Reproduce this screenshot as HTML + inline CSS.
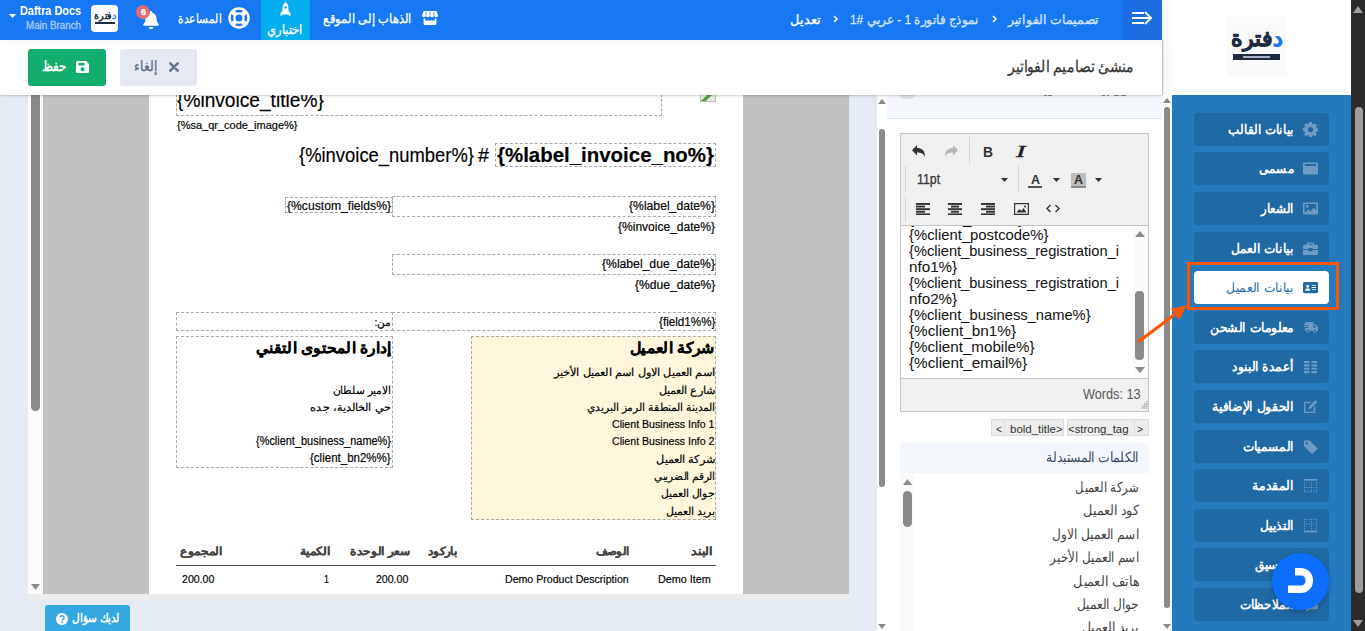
<!DOCTYPE html>
<html lang="ar">
<head>
<meta charset="utf-8">
<title>منشئ تصاميم الفواتير</title>
<style>
*{box-sizing:border-box;margin:0;padding:0}
html,body{width:1365px;height:631px;overflow:hidden}
body{position:relative;background:#e4ebf3;font-family:"Liberation Sans",sans-serif;color:#222}
.abs{position:absolute}
.t{position:absolute;white-space:nowrap;line-height:1;color:#222}
#topbar{left:0;top:0;width:1162px;height:40px;background:#1877f2;box-shadow:4px 0 10px rgba(0,0,0,.06)}
#tab{left:261px;top:0;width:49px;height:40px;background:#05aeef}
#topbar .t{-webkit-text-stroke:.3px currentColor}
#menu{left:1122px;top:0;width:40px;height:40px;background:#1a6ce0}
#subhead{left:0;top:40px;width:1163px;height:55px;background:#fff;border-right:1px solid #c6c6c6;box-shadow:0 1px 1.500px rgba(0,0,0,.16),5px 0 10px rgba(0,0,0,.05)}
#logoarea{left:1162px;top:0;width:189px;height:95px;background:#fff}
#logobox{left:65px;top:17px;width:60px;height:60px;background:#fafafa}
#pscroll{left:1351px;top:0;width:14px;height:631px;background:#2b2b2b}
#side{left:1172px;top:95px;width:179px;height:536px;background:#237abd}
.sb{position:absolute;left:22px;width:135px;height:33px;border-radius:4px;background:#1f69a4}
.sb svg{position:absolute;right:11px;top:9px;width:15px;height:15px;fill:#6d9cc6}
.sb.on{background:#fff}
.sb.on svg{fill:#1f69a4}
#mid{left:877px;top:95px;width:295px;height:536px;background:#fff;overflow:hidden}
.thumb{position:absolute;background:#8a8a8a;border-radius:4px}
#prev{left:28px;top:95px;width:821px;height:499px;background:#c2c2c2;overflow:hidden}
#prevtrack{left:0;top:0;width:15px;height:499px;background:#fcfcfc}
#paper{left:121px;top:0;width:594px;height:499px;background:#fff;overflow:hidden}
#paper .t{-webkit-text-stroke:.18px currentColor}
#prevfoot{left:28px;top:594px;width:821px;height:5px;background:#ececec}
</style>
</head>
<body>

<div id="prev" class="abs">
  <div id="prevtrack" class="abs">
    <div class="thumb" style="left:3px;top:-6px;width:9px;height:322px;border-radius:4.500px"></div>
    <svg class="abs" style="left:3px;top:488.500px" width="9" height="6"><path d="M0 0h9L4.500 6z" fill="#8a8a8a"/></svg>
  </div>
  <div id="paper" class="abs">
<div class="abs" style="left:27.0px;top:-15.0px;width:486.0px;height:35.9px;border:1px dashed #a9a9a9"></div>
<div class="abs" style="left:346.3px;top:48.0px;width:220.7px;height:23.5px;border:1px dashed #a9a9a9"></div>
<div class="abs" style="left:136.0px;top:102.0px;width:107.5px;height:16.0px;border:1px dashed #a9a9a9"></div>
<div class="abs" style="left:243.0px;top:101.0px;width:324.0px;height:20.5px;border:1px dashed #a9a9a9"></div>
<div class="abs" style="left:243.0px;top:159.0px;width:324.0px;height:20.5px;border:1px dashed #a9a9a9"></div>
<div class="abs" style="left:243.0px;top:217.0px;width:324.0px;height:19.0px;border:1px dashed #a9a9a9"></div>
<div class="abs" style="left:27.0px;top:217.0px;width:216.5px;height:19.0px;border:1px dashed #a9a9a9"></div>
<div class="abs" style="left:322.0px;top:240.8px;width:245.0px;height:184.2px;background:#fff6dc;border:1px dashed #a9a9a9"></div>
<div class="abs" style="left:27.0px;top:241.0px;width:216.5px;height:132.0px;border:1px dashed #a9a9a9"></div>
<div class="abs" style="left:551.0px;top:-5.0px;width:16.0px;height:11.5px;background:#e8efe4;border:1px solid #b9c4b4"></div>
<svg class="abs" style="left:552px;top:0px" width="14" height="6"><path d="M0 6L6 0h5L5 6z" fill="#5aa04a"/></svg>
<div class="t" style="font-size:20.5px;color:#000;top:-5.0px;--w:146.8px;left:27.7px;transform:scaleX(0.884);transform-origin:0 0">{%invoice_title%}</div>
<div class="t" style="font-size:11px;color:#000;top:24.8px;--w:120.5px;left:27.5px;transform:scaleX(0.996);transform-origin:0 0">{%sa_qr_code_image%}</div>
<div class="t" style="font-size:20.5px;color:#000;top:50.2px;--w:175.0px;left:150.0px;transform:scaleX(0.854);transform-origin:0 0">{%invoice_number%}</div>
<div class="t" style="font-size:20.5px;color:#000;top:50.2px;--w:11.0px;left:328.5px;transform:scaleX(0.917);transform-origin:0 0">#</div>
<div class="t" style="font-size:20.5px;font-weight:bold;color:#000;top:50.2px;--w:217.0px;left:348.0px;transform:scaleX(0.956);transform-origin:0 0">{%label_invoice_no%}</div>
<div class="t" style="font-size:12.5px;color:#000;top:104.8px;--w:104.0px;left:138.0px;transform:scaleX(0.920);transform-origin:0 0">{%custom_fields%}</div>
<div class="t" style="font-size:12.5px;color:#000;top:105.1px;--w:86.0px;left:480.0px;transform:scaleX(0.945);transform-origin:0 0">{%label_date%}</div>
<div class="t" style="font-size:12.5px;color:#000;top:125.6px;--w:97.0px;left:469.0px;transform:scaleX(0.924);transform-origin:0 0">{%invoice_date%}</div>
<div class="t" style="font-size:12.5px;color:#000;top:163.1px;--w:113.0px;left:453.0px;transform:scaleX(0.950);transform-origin:0 0">{%label_due_date%}</div>
<div class="t" style="font-size:12.5px;color:#000;top:183.6px;--w:80.3px;left:485.7px;transform:scaleX(0.945);transform-origin:0 0">{%due_date%}</div>
<div class="t" style="font-size:12.5px;color:#000;top:220.6px;--w:56.5px;left:509.5px;transform:scaleX(0.897);transform-origin:0 0">{field1%%}</div>
<div class="t" dir="rtl" style="font-size:11px;color:#000;top:222.3px;--w:16.5px;left:242.0px;transform:translateX(-100%) scaleX(0.971);transform-origin:100% 0">من:</div>
<div class="t" dir="rtl" style="font-size:15px;font-weight:bold;color:#000;top:244.7px;--w:85.3px;left:566.0px;transform:translateX(-100%) scaleX(0.907);transform-origin:100% 0">شركة العميل</div>
<div class="t" dir="rtl" style="font-size:11px;color:#000;top:272.4px;--w:161.2px;left:566.0px;transform:translateX(-100%) scaleX(1.033);transform-origin:100% 0">اسم العميل الاول اسم العميل الأخير</div>
<div class="t" dir="rtl" style="font-size:11px;color:#000;top:290.1px;--w:56.4px;left:566.0px;transform:translateX(-100%) scaleX(1.025);transform-origin:100% 0">شارع العميل</div>
<div class="t" dir="rtl" style="font-size:11px;color:#000;top:306.9px;--w:128.4px;left:566.0px;transform:translateX(-100%) scaleX(0.973);transform-origin:100% 0">المدينة المنطقة الرمز البريدي</div>
<div class="t" style="font-size:11.3px;color:#000;top:323.8px;--w:102.5px;left:463.0px;transform:scaleX(0.976);transform-origin:0 0">Client Business Info 1</div>
<div class="t" style="font-size:11.3px;color:#000;top:340.5px;--w:102.5px;left:463.0px;transform:scaleX(0.976);transform-origin:0 0">Client Business Info 2</div>
<div class="t" dir="rtl" style="font-size:11px;color:#000;top:359.4px;--w:58.7px;left:566.0px;transform:translateX(-100%) scaleX(1.030);transform-origin:100% 0">شركة العميل</div>
<div class="t" dir="rtl" style="font-size:11px;color:#000;top:376.4px;--w:61.0px;left:566.0px;transform:translateX(-100%) scaleX(0.953);transform-origin:100% 0">الرقم الضريبي</div>
<div class="t" dir="rtl" style="font-size:11px;color:#000;top:393.1px;--w:53.7px;left:566.0px;transform:translateX(-100%) scaleX(0.976);transform-origin:100% 0">جوال العميل</div>
<div class="t" dir="rtl" style="font-size:11px;color:#000;top:410.5px;--w:48.6px;left:566.0px;transform:translateX(-100%) scaleX(0.992);transform-origin:100% 0">بريد العميل</div>
<div class="t" dir="rtl" style="font-size:15px;font-weight:bold;color:#000;top:244.7px;--w:135.5px;left:242.0px;transform:translateX(-100%) scaleX(0.880);transform-origin:100% 0">إدارة المحتوى التقني</div>
<div class="t" dir="rtl" style="font-size:11px;color:#000;top:290.2px;--w:58.4px;left:242.0px;transform:translateX(-100%) scaleX(0.973);transform-origin:100% 0">الامير سلطان</div>
<div class="t" dir="rtl" style="font-size:11px;color:#000;top:307.3px;--w:80.7px;left:242.0px;transform:translateX(-100%) scaleX(1.022);transform-origin:100% 0">حي الخالدية، جده</div>
<div class="t" style="font-size:12.5px;color:#000;top:339.8px;--w:135.0px;left:107.0px;transform:scaleX(0.839);transform-origin:0 0">{%client_business_name%}</div>
<div class="t" style="font-size:12.5px;color:#000;top:357.4px;--w:80.7px;left:161.3px;transform:scaleX(0.887);transform-origin:0 0">{client_bn2%%}</div>
<div class="t" dir="rtl" style="font-size:11px;font-weight:bold;color:#444;top:451.1px;--w:42.0px;left:73.0px;transform:translateX(-100%) scaleX(0.933);transform-origin:100% 0">المجموع</div>
<div class="t" dir="rtl" style="font-size:11px;font-weight:bold;color:#444;top:451.1px;--w:30.5px;left:181.0px;transform:translateX(-100%) scaleX(0.953);transform-origin:100% 0">الكمية</div>
<div class="t" dir="rtl" style="font-size:11px;font-weight:bold;color:#444;top:451.1px;--w:60.0px;left:261.0px;transform:translateX(-100%) scaleX(0.952);transform-origin:100% 0">سعر الوحدة</div>
<div class="t" dir="rtl" style="font-size:11px;font-weight:bold;color:#444;top:451.1px;--w:29.3px;left:308.0px;transform:translateX(-100%) scaleX(0.888);transform-origin:100% 0">باركود</div>
<div class="t" dir="rtl" style="font-size:11px;font-weight:bold;color:#444;top:451.1px;--w:33.4px;left:480.4px;transform:translateX(-100%) scaleX(0.856);transform-origin:100% 0">الوصف</div>
<div class="t" dir="rtl" style="font-size:11px;font-weight:bold;color:#444;top:451.1px;--w:20.7px;left:563.0px;transform:translateX(-100%) scaleX(0.941);transform-origin:100% 0">البند</div>
<div class="abs" style="left:27.0px;top:469.8px;width:540.0px;height:1.2px;background:#444"></div>
<div class="t" style="font-size:11.5px;color:#000;top:478.5px;--w:32.4px;left:32.6px;transform:scaleX(0.853);transform-origin:0 0">200.00</div>
<div class="t" style="font-size:11.5px;color:#000;top:478.5px;--w:5.0px;left:175.0px;transform:scaleX(0.714);transform-origin:0 0">1</div>
<div class="t" style="font-size:11.5px;color:#000;top:478.5px;--w:32.3px;left:226.7px;transform:scaleX(0.850);transform-origin:0 0">200.00</div>
<div class="t" style="font-size:11.5px;color:#000;top:478.5px;--w:123.7px;left:355.5px;transform:scaleX(0.865);transform-origin:0 0">Demo Product Description</div>
<div class="t" style="font-size:11.5px;color:#000;top:478.5px;--w:52.8px;left:508.5px;transform:scaleX(0.895);transform-origin:0 0">Demo Item</div>
  </div>
</div>
<div id="prevfoot" class="abs"></div>

<div id="mid" class="abs">
<div class="abs" style="left:10.0px;top:0.0px;width:275.0px;height:24.4px;background:#f5f8fc;border-bottom:1px solid #dbe4f1"></div>
<div class="abs" style="left:21.0px;top:-11.0px;width:18.0px;height:15.0px;background:#dfe1e6;border-radius:9px"></div>
<div class="abs" style="left:166.5px;top:0.0px;width:3.0px;height:1.3px;background:#5d6473;opacity:.7"></div><div class="abs" style="left:171.0px;top:0.0px;width:4.0px;height:1.3px;background:#5d6473;opacity:.7"></div><div class="abs" style="left:224.5px;top:0.0px;width:3.5px;height:1.3px;background:#5d6473;opacity:.7"></div><div class="abs" style="left:229.5px;top:0.0px;width:2.5px;height:1.3px;background:#5d6473;opacity:.7"></div><div class="abs" style="left:237.0px;top:0.0px;width:5.0px;height:1.3px;background:#5d6473;opacity:.7"></div><div class="abs" style="left:244.0px;top:0.0px;width:4.5px;height:1.3px;background:#5d6473;opacity:.7"></div>
<svg class="abs" style="left:1.0px;top:3.5px" width="8" height="5"><path d="M4.0 0L8 5H0z" fill="#8a8a8a"/></svg>
<div class="abs" style="left:2.2px;top:34.0px;width:5.6px;height:357.5px;background:#8a8a8a;border-radius:3px"></div>
<svg class="abs" style="left:1.0px;top:528.5px" width="8" height="5"><path d="M0 0H8L4.0 5z" fill="#8a8a8a"/></svg>
<svg class="abs" style="left:286.0px;top:2.5px" width="8" height="5"><path d="M4.0 0L8 5H0z" fill="#8a8a8a"/></svg>
<div class="abs" style="left:287.0px;top:12.0px;width:6.0px;height:500.6px;background:#8a8a8a;border-radius:3px"></div>
<svg class="abs" style="left:286.0px;top:529.0px" width="8" height="5"><path d="M0 0H8L4.0 5z" fill="#8a8a8a"/></svg>
<div class="abs" style="left:23.0px;top:38.0px;width:249.0px;height:279.2px;background:#f0f0f0;border:1px solid #c4c4c4"></div>
<div class="abs" style="left:24.0px;top:130.0px;width:247.0px;height:154.3px;background:#fff;border-top:1px solid #c4c4c4;border-bottom:1px solid #c4c4c4"></div>
<div class="abs" style="left:92.4px;top:42.0px;width:1.0px;height:26.5px;background:#d4d4d4"></div>
<div class="abs" style="left:27.7px;top:71.0px;width:1.0px;height:26.0px;background:#d4d4d4"></div>
<div class="abs" style="left:141.3px;top:71.0px;width:1.0px;height:26.0px;background:#d4d4d4"></div>
<div class="abs" style="left:27.7px;top:101.5px;width:1.0px;height:25.5px;background:#d4d4d4"></div>
<svg class="abs" style="left:35.0px;top:50.0px" width="13" height="12" viewBox="0 0 13 12"><path d="M5 0v3c5 0 8 2.500 8 9-1.500-3.500-4-4.500-8-4.500v3L0 5.200z" fill="#333"/></svg>
<svg class="abs" style="left:68.0px;top:50.0px" width="13" height="12" viewBox="0 0 13 12"><path d="M8 0v3c-5 0-8 2.500-8 9 1.500-3.500 4-4.500 8-4.500v3l5-5.300z" fill="#b5b5b5"/></svg>
<div class="t" style="font-size:15px;font-weight:bold;color:#333;top:48.5px;--w:10.0px;left:105.5px;transform:scaleX(0.909);transform-origin:0 0">B</div>
<div class="t" style="font-size:17px;font-style:italic;font-family:'Liberation Serif',sans-serif;top:47.5px;--w:9.5px;left:138.5px;transform:scaleX(1.583);transform-origin:0 0;-webkit-text-stroke:.4px #222">I</div>
<div class="t" style="font-size:14.5px;color:#333;top:77.2px;--w:23.1px;left:39.6px;transform:scaleX(0.856);transform-origin:0 0;-webkit-text-stroke:.25px #333">11pt</div>
<svg class="abs" style="left:124.4px;top:82.5px" width="7" height="4"><path d="M0 0H7L3.5 4z" fill="#333"/></svg>
<div class="t" style="font-size:12.5px;font-weight:bold;color:#333;top:79.1px;--w:9.0px;left:154.0px;transform:scaleX(1.000);transform-origin:0 0">A</div>
<div class="abs" style="left:151.0px;top:90.8px;width:14.0px;height:2.0px;background:#555"></div>
<svg class="abs" style="left:175.5px;top:82.5px" width="7" height="4"><path d="M0 0H7L3.5 4z" fill="#333"/></svg>
<div class="abs" style="left:194.2px;top:78.0px;width:14.8px;height:14.6px;background:#bdbdbd"></div>
<div class="t" style="font-size:12.5px;font-weight:bold;color:#333;top:79.1px;--w:9.0px;left:197.2px;transform:scaleX(1.000);transform-origin:0 0">A</div>
<div class="abs" style="left:194.2px;top:90.5px;width:14.8px;height:2.1px;background:#8c8c8c"></div>
<svg class="abs" style="left:218.4px;top:82.5px" width="7" height="4"><path d="M0 0H7L3.5 4z" fill="#333"/></svg>
<svg class="abs" style="left:38.7px;top:107.8px" width="14" height="12.5" viewBox="0 0 14 12.5"><g fill="#333"><rect x="0" y="0.0" width="14" height="1.900"/><rect x="0" y="2.6" width="9" height="1.900"/><rect x="0" y="5.2" width="14" height="1.900"/><rect x="0" y="7.8" width="9" height="1.900"/><rect x="0" y="10.4" width="14" height="1.900"/></g></svg>
<svg class="abs" style="left:71.0px;top:107.8px" width="14" height="12.5" viewBox="0 0 14 12.5"><g fill="#333"><rect x="0.0" y="0.0" width="14" height="1.900"/><rect x="3.0" y="2.6" width="8" height="1.900"/><rect x="0.0" y="5.2" width="14" height="1.900"/><rect x="3.0" y="7.8" width="8" height="1.900"/><rect x="0.0" y="10.4" width="14" height="1.900"/></g></svg>
<svg class="abs" style="left:104.0px;top:107.8px" width="14" height="12.5" viewBox="0 0 14 12.5"><g fill="#333"><rect x="0" y="0.0" width="14" height="1.900"/><rect x="5" y="2.6" width="9" height="1.900"/><rect x="0" y="5.2" width="14" height="1.900"/><rect x="5" y="7.8" width="9" height="1.900"/><rect x="0" y="10.4" width="14" height="1.900"/></g></svg>
<svg class="abs" style="left:136.5px;top:108.0px" width="15" height="12" viewBox="0 0 15 12"><rect x=".6" y=".6" width="13.800" height="10.800" fill="none" stroke="#333" stroke-width="1.200"/><path d="M2.500 9.500l3-3.500 2 2 2-3 3 4.500z" fill="#333"/><circle cx="11" cy="3.500" r="1" fill="#333"/></svg>
<svg class="abs" style="left:169.0px;top:109.0px" width="14" height="9" viewBox="0 0 14 9"><path d="M4.500 1L1 4.500 4.500 8M9.500 1L13 4.500 9.500 8" stroke="#333" stroke-width="1.400" fill="none"/></svg>
<div class="abs" style="left:24px;top:131px;width:232px;height:152px;overflow:hidden"><div class="t" style="font-size:15px;color:#111;top:-14.8px;--w:114.0px;left:8.0px;transform:scaleX(1.036);transform-origin:0 0">{%client_state%}</div><div class="t" style="font-size:15px;color:#111;top:1.2px;--w:139.5px;left:8.0px;transform:scaleX(1.011);transform-origin:0 0">{%client_postcode%}</div><div class="t" style="font-size:15px;color:#111;top:17.2px;--w:210.0px;left:8.0px;transform:scaleX(1.000);transform-origin:0 0">{%client_business_registration_i</div><div class="t" style="font-size:15px;color:#111;top:33.1px;--w:48.2px;left:8.0px;transform:scaleX(1.048);transform-origin:0 0">nfo1%}</div><div class="t" style="font-size:15px;color:#111;top:49.2px;--w:210.0px;left:8.0px;transform:scaleX(1.000);transform-origin:0 0">{%client_business_registration_i</div><div class="t" style="font-size:15px;color:#111;top:65.2px;--w:48.2px;left:8.0px;transform:scaleX(1.048);transform-origin:0 0">nfo2%}</div><div class="t" style="font-size:15px;color:#111;top:81.1px;--w:181.6px;left:8.0px;transform:scaleX(0.998);transform-origin:0 0">{%client_business_name%}</div><div class="t" style="font-size:15px;color:#111;top:97.1px;--w:107.0px;left:8.0px;transform:scaleX(1.049);transform-origin:0 0">{%client_bn1%}</div><div class="t" style="font-size:15px;color:#111;top:113.1px;--w:125.5px;left:8.0px;transform:scaleX(1.037);transform-origin:0 0">{%client_mobile%}</div><div class="t" style="font-size:15px;color:#111;top:129.1px;--w:118.0px;left:8.0px;transform:scaleX(1.044);transform-origin:0 0">{%client_email%}</div></div>
<div class="abs" style="left:255.8px;top:131.0px;width:15.2px;height:152.3px;background:#fafafa"></div>
<svg class="abs" style="left:257.5px;top:135.8px" width="10" height="6"><path d="M5.0 0L10 6H0z" fill="#8a8a8a"/></svg>
<div class="abs" style="left:258.2px;top:196.0px;width:8.8px;height:69.0px;background:#8a8a8a;border-radius:4px"></div>
<svg class="abs" style="left:257.5px;top:271.7px" width="10" height="6"><path d="M0 0H10L5.0 6z" fill="#8a8a8a"/></svg>
<div class="t" style="font-size:14px;color:#595959;top:292.3px;--w:57.6px;left:206.0px;transform:scaleX(0.886);transform-origin:0 0">Words: 13</div>
<svg class="abs" style="left:264.0px;top:306.0px" width="7" height="8" viewBox="0 0 7 8"><g fill="#aaa"><rect x="5" y="0" width="1.500" height="1.500"/><rect x="3" y="2.200" width="1.500" height="1.500"/><rect x="5" y="2.200" width="1.500" height="1.500"/><rect x="1" y="4.400" width="1.500" height="1.500"/><rect x="3" y="4.400" width="1.500" height="1.500"/><rect x="5" y="4.400" width="1.500" height="1.500"/><rect x="0" y="6.500" width="6.500" height="1"/></g></svg>
<div class="abs" style="left:114.4px;top:324.3px;width:72.4px;height:16.4px;background:#ececec;border:1px solid #dcdcdc"></div>
<div class="abs" style="left:127.3px;top:324.3px;width:1.0px;height:16.4px;background:#dcdcdc"></div>
<div class="abs" style="left:190.0px;top:324.3px;width:81.6px;height:16.4px;background:#ececec;border:1px solid #dcdcdc"></div>
<div class="abs" style="left:257.4px;top:324.3px;width:1.0px;height:16.4px;background:#dcdcdc"></div>
<div class="t" style="font-size:11.5px;color:#333;top:328.9px;--w:6.0px;left:118.5px;transform:scaleX(0.857);transform-origin:0 0">&lt;</div>
<div class="t" style="font-size:11.5px;color:#333;top:328.9px;--w:52.6px;left:133.4px;transform:scaleX(0.923);transform-origin:0 0">bold_title&gt;</div>
<div class="t" style="font-size:11.5px;color:#333;top:328.9px;--w:60.5px;left:191.4px;transform:scaleX(0.931);transform-origin:0 0">&lt;strong_tag</div>
<div class="t" style="font-size:11.5px;color:#333;top:328.9px;--w:6.0px;left:259.5px;transform:scaleX(0.857);transform-origin:0 0">&gt;</div>
<div class="abs" style="left:23.0px;top:348.0px;width:249.0px;height:29.7px;background:#f3f7fc"></div>
<div class="t" dir="rtl" style="font-size:14px;color:#3a4766;top:355.0px;--w:92.8px;left:262.3px;transform:translateX(-100%) scaleX(0.884);transform-origin:100% 0">الكلمات المستبدلة</div>
<div class="abs" style="left:23.0px;top:378.0px;width:15.0px;height:158.0px;background:#fafafa"></div>
<svg class="abs" style="left:26.0px;top:383.7px" width="9" height="6"><path d="M4.5 0L9 6H0z" fill="#8a8a8a"/></svg>
<div class="abs" style="left:26.0px;top:395.6px;width:9.0px;height:36.4px;background:#8a8a8a;border-radius:4.500px"></div>
<div class="t" dir="rtl" style="font-size:13.5px;color:#444;top:386.2px;--w:63.6px;left:262.3px;transform:translateX(-100%) scaleX(0.826);transform-origin:100% 0">شركة العميل</div>
<div class="t" dir="rtl" style="font-size:13.5px;color:#444;top:409.2px;--w:56.0px;left:262.3px;transform:translateX(-100%) scaleX(0.903);transform-origin:100% 0">كود العميل</div>
<div class="t" dir="rtl" style="font-size:13.5px;color:#444;top:432.8px;--w:86.7px;left:262.3px;transform:translateX(-100%) scaleX(0.867);transform-origin:100% 0">اسم العميل الاول</div>
<div class="t" dir="rtl" style="font-size:13.5px;color:#444;top:455.9px;--w:88.6px;left:262.3px;transform:translateX(-100%) scaleX(0.852);transform-origin:100% 0">اسم العميل الأخير</div>
<div class="t" dir="rtl" style="font-size:13.5px;color:#444;top:479.6px;--w:65.5px;left:262.3px;transform:translateX(-100%) scaleX(0.910);transform-origin:100% 0">هاتف العميل</div>
<div class="t" dir="rtl" style="font-size:13.5px;color:#444;top:503.2px;--w:62.3px;left:262.3px;transform:translateX(-100%) scaleX(0.865);transform-origin:100% 0">جوال العميل</div>
<div class="t" dir="rtl" style="font-size:13.5px;color:#444;top:526.2px;--w:57.4px;left:262.3px;transform:translateX(-100%) scaleX(0.883);transform-origin:100% 0">بريد العميل</div>
</div>

<div id="side" class="abs">
<div class="sb" style="top:17.8px"><svg viewBox="0 0 16 16"><path d="M6.6 0h2.8l.4 2.1 1.3.6 1.8-1.2 2 2-1.2 1.8.6 1.3 2.1.4v2.8l-2.1.4-.6 1.3 1.2 1.8-2 2-1.8-1.2-1.3.6-.4 2.1H6.6l-.4-2.1-1.3-.6-1.8 1.2-2-2 1.2-1.8-.6-1.3L-.4 9.400V6.600l2.100-.4.6-1.3L1.100 3.100l2-2 1.800 1.200 1.300-.6z M8 5.200a2.800 2.800 0 1 0 0 5.600 2.800 2.800 0 0 0 0-5.600z" fill-rule="evenodd"/></svg></div>
<div class="t" dir="rtl" style="font-size:13px;font-weight:bold;color:#fff;top:27.8px;--w:65.5px;left:121.5px;transform:translateX(-100%) scaleX(0.780);transform-origin:100% 0">بيانات القالب</div>
<div class="sb" style="top:57.4px"><svg viewBox="0 0 16 16"><path d="M1.500 1.500h13a1.500 1.500 0 0 1 1.500 1.500v10a1.500 1.500 0 0 1-1.500 1.500h-13a1.500 1.500 0 0 1-1.500-1.500v-10a1.500 1.500 0 0 1 1.500-1.500z M2 3.300v2h12v-2z" fill-rule="evenodd"/></svg></div>
<div class="t" dir="rtl" style="font-size:13px;font-weight:bold;color:#fff;top:67.4px;--w:35.0px;left:121.5px;transform:translateX(-100%) scaleX(0.814);transform-origin:100% 0">مسمى</div>
<div class="sb" style="top:97.0px"><svg viewBox="0 0 16 16"><path d="M1.500 1.500h13a1.500 1.500 0 0 1 1.500 1.500v10a1.500 1.500 0 0 1-1.500 1.500h-13a1.500 1.500 0 0 1-1.500-1.500v-10a1.500 1.500 0 0 1 1.500-1.500z M1.700 3.200v9.600l3.800-4 2.500 2.500 3.500-4.300 2.800 3.500v-7.300z M4.500 4.300a1.500 1.500 0 1 1 0 3 1.500 1.500 0 0 1 0-3z" fill-rule="evenodd"/></svg></div>
<div class="t" dir="rtl" style="font-size:13px;font-weight:bold;color:#fff;top:107.0px;--w:32.7px;left:121.5px;transform:translateX(-100%) scaleX(0.798);transform-origin:100% 0">الشعار</div>
<div class="sb" style="top:136.6px"><svg viewBox="0 0 16 16"><path d="M5 1.500h6a1 1 0 0 1 1 1v1.500h2.500a1.500 1.500 0 0 1 1.500 1.500v3h-6v-1h-4v1h-6v-3a1.500 1.500 0 0 1 1.500-1.500h2.500v-1.500a1 1 0 0 1 1-1z M6 3v1h4v-1z M0 9.500h6v1.500h4v-1.500h6v4a1.500 1.500 0 0 1-1.500 1.500h-13a1.500 1.500 0 0 1-1.500-1.500z" fill-rule="evenodd"/></svg></div>
<div class="t" dir="rtl" style="font-size:13px;font-weight:bold;color:#fff;top:146.6px;--w:63.5px;left:121.5px;transform:translateX(-100%) scaleX(0.804);transform-origin:100% 0">بيانات العمل</div>
<div class="sb on" style="top:176.2px"><svg viewBox="0 0 16 16"><path d="M1.500 2h13a1.500 1.500 0 0 1 1.500 1.500v9a1.500 1.500 0 0 1-1.500 1.500h-13a1.500 1.500 0 0 1-1.500-1.500v-9a1.500 1.500 0 0 1 1.500-1.500z M5 5a1.600 1.600 0 1 0 0 3.200 1.600 1.600 0 0 0 0-3.200z M2.300 11.500h5.400c0-1.700-1-2.600-2.700-2.600s-2.700.9-2.700 2.600z M9.300 5.500v1h4.500v-1z M9.300 7.500v1h4.500v-1z M9.300 9.500v1h4.500v-1z" fill-rule="evenodd"/></svg></div>
<div class="t" dir="rtl" style="font-size:13px;color:#2a6fb0;top:186.2px;--w:67.9px;left:121.5px;transform:translateX(-100%) scaleX(0.943);transform-origin:100% 0">بيانات العميل</div>
<div class="sb" style="top:215.8px"><svg viewBox="0 0 16 16"><path d="M2 2.500h9v2h2.300l2.700 3v4h-1.300a2 2 0 0 1-4 0h-3.400a2 2 0 0 1-4 0h-1.300v-3h3.500v-1h-5v-1h5.500v-1h-5v-1h1z M11 5.500v2.500h3.300l-2-2.500z M5.300 10.200a1.200 1.200 0 1 0 0 2.400 1.200 1.200 0 0 0 0-2.400z M12.700 10.200a1.200 1.200 0 1 0 0 2.400 1.200 1.200 0 0 0 0-2.400z" fill-rule="evenodd"/></svg></div>
<div class="t" dir="rtl" style="font-size:13px;font-weight:bold;color:#fff;top:225.8px;--w:83.8px;left:121.5px;transform:translateX(-100%) scaleX(0.830);transform-origin:100% 0">معلومات الشحن</div>
<div class="sb" style="top:255.4px"><svg viewBox="0 0 16 16"><path d="M1 2h6v2.300h-6z M9 2h6v2.300h-6z M1 5.600h6v2.300h-6z M9 5.600h6v2.300h-6z M1 9.200h6v2.300h-6z M9 9.200h6v2.300h-6z M1 12.800h6v2.300h-6z M9 12.800h6v2.300h-6z"/></svg></div>
<div class="t" dir="rtl" style="font-size:13px;font-weight:bold;color:#fff;top:265.4px;--w:61.9px;left:121.5px;transform:translateX(-100%) scaleX(0.814);transform-origin:100% 0">أعمدة البنود</div>
<div class="sb" style="top:295.0px"><svg viewBox="0 0 16 16"><path d="M2 3h7l-1.600 1.600h-5v9h9v-5l1.600-1.600v7a1 1 0 0 1-1 1h-10a1 1 0 0 1-1-1v-10a1 1 0 0 1 1-1z M13.300 1.200l1.500 1.500a.8.8 0 0 1 0 1.100l-6.300 6.300-2.600.5.500-2.600 6.300-6.300a.8.800 0 0 1 .6-.5z" fill-rule="evenodd"/></svg></div>
<div class="t" dir="rtl" style="font-size:13px;font-weight:bold;color:#fff;top:305.0px;--w:81.8px;left:121.5px;transform:translateX(-100%) scaleX(0.787);transform-origin:100% 0">الحقول الإضافية</div>
<div class="sb" style="top:334.6px"><svg viewBox="0 0 16 16"><path d="M1 1.500h6l8 8a1 1 0 0 1 0 1.400l-4.600 4.600a1 1 0 0 1-1.400 0l-8-8z M4 3.300a1.300 1.300 0 1 0 0 2.600 1.300 1.300 0 0 0 0-2.600z" fill-rule="evenodd"/></svg></div>
<div class="t" dir="rtl" style="font-size:13px;font-weight:bold;color:#fff;top:344.6px;--w:51.5px;left:121.5px;transform:translateX(-100%) scaleX(0.817);transform-origin:100% 0">المسميات</div>
<div class="sb" style="top:374.2px"><svg viewBox="0 0 16 16"><path d="M1 1h14v1.8h-14z"/><rect x="1" y="4.5" width="1.2" height="1.2"/><rect x="1" y="7" width="1.2" height="1.2"/><rect x="1" y="9.5" width="1.2" height="1.2"/><rect x="1" y="12" width="1.2" height="1.2"/><rect x="1" y="14" width="1.2" height="1.2"/><rect x="3.5" y="9.5" width="1.2" height="1.2"/><rect x="3.5" y="14" width="1.2" height="1.2"/><rect x="6" y="9.5" width="1.2" height="1.2"/><rect x="6" y="14" width="1.2" height="1.2"/><rect x="8.4" y="4.5" width="1.2" height="1.2"/><rect x="8.4" y="7" width="1.2" height="1.2"/><rect x="8.4" y="9.5" width="1.2" height="1.2"/><rect x="8.4" y="12" width="1.2" height="1.2"/><rect x="8.4" y="14" width="1.2" height="1.2"/><rect x="10.9" y="9.5" width="1.2" height="1.2"/><rect x="10.9" y="14" width="1.2" height="1.2"/><rect x="13.8" y="4.5" width="1.2" height="1.2"/><rect x="13.8" y="7" width="1.2" height="1.2"/><rect x="13.8" y="9.5" width="1.2" height="1.2"/><rect x="13.8" y="12" width="1.2" height="1.2"/><rect x="13.8" y="14" width="1.2" height="1.2"/></svg></div>
<div class="t" dir="rtl" style="font-size:13px;font-weight:bold;color:#fff;top:384.2px;--w:41.5px;left:121.5px;transform:translateX(-100%) scaleX(0.814);transform-origin:100% 0">المقدمة</div>
<div class="sb" style="top:413.8px"><svg viewBox="0 0 16 16"><path d="M1 13.5h14v1.8h-14z"/><rect x="1" y="1" width="1.2" height="1.2"/><rect x="1" y="3.5" width="1.2" height="1.2"/><rect x="1" y="6" width="1.2" height="1.2"/><rect x="1" y="8.5" width="1.2" height="1.2"/><rect x="1" y="11" width="1.2" height="1.2"/><rect x="3.5" y="1" width="1.2" height="1.2"/><rect x="3.5" y="6" width="1.2" height="1.2"/><rect x="6" y="1" width="1.2" height="1.2"/><rect x="6" y="6" width="1.2" height="1.2"/><rect x="8.4" y="1" width="1.2" height="1.2"/><rect x="8.4" y="3.5" width="1.2" height="1.2"/><rect x="8.4" y="6" width="1.2" height="1.2"/><rect x="8.4" y="8.5" width="1.2" height="1.2"/><rect x="8.4" y="11" width="1.2" height="1.2"/><rect x="10.9" y="1" width="1.2" height="1.2"/><rect x="10.9" y="6" width="1.2" height="1.2"/><rect x="13.8" y="1" width="1.2" height="1.2"/><rect x="13.8" y="3.5" width="1.2" height="1.2"/><rect x="13.8" y="6" width="1.2" height="1.2"/><rect x="13.8" y="8.5" width="1.2" height="1.2"/><rect x="13.8" y="11" width="1.2" height="1.2"/></svg></div>
<div class="t" dir="rtl" style="font-size:13px;font-weight:bold;color:#fff;top:423.8px;--w:34.5px;left:121.5px;transform:translateX(-100%) scaleX(0.784);transform-origin:100% 0">التذييل</div>
<div class="sb" style="top:453.4px"><svg viewBox="0 0 16 16"><path d="M10 1l5 5-6 6-5-5z M3 8l5 5c-2 3-6 2-8 2 2-2 1-5 3-7z"/></svg></div>
<div class="t" dir="rtl" style="font-size:13px;font-weight:bold;color:#fff;top:463.4px;--w:39.5px;left:121.5px;transform:translateX(-100%) scaleX(0.806);transform-origin:100% 0">التنسيق</div>
<div class="sb" style="top:493.0px"><svg viewBox="0 0 16 16"><path d="M1.500 2h13a1.500 1.500 0 0 1 1.500 1.500v8a1.500 1.500 0 0 1-1.500 1.500h-7l-4 3v-3h-2a1.500 1.500 0 0 1-1.500-1.500v-8a1.500 1.500 0 0 1 1.500-1.500z"/></svg></div>
<div class="t" dir="rtl" style="font-size:13px;font-weight:bold;color:#fff;top:503.0px;--w:54.5px;left:121.5px;transform:translateX(-100%) scaleX(0.801);transform-origin:100% 0">الملاحظات</div>
</div>

<div id="logoarea" class="abs">
  <div id="logobox" class="abs">
<div class="t" dir="rtl" style="font-size:22px;font-weight:bold;color:#1f2a44;top:10.8px;--w:52.0px;left:56.0px;transform:translateX(-100%) scaleX(0.852);transform-origin:100% 0;-webkit-text-stroke:.5px currentColor"><span style="color:#1877f2">د</span>فترة</div>
<div class="abs" style="left:6px;top:36.500px;width:47px;height:6.500px;background:#1f2a44"></div>
<div class="abs" style="left:16px;top:39px;width:27px;height:1.500px;background:#aab2c2"></div>
  </div>
</div>

<div id="subhead" class="abs">
<div class="abs" style="left:28px;top:9px;width:78px;height:37px;background:#13ae6d;border-radius:3px"></div>
<div class="t" dir="rtl" style="font-size:13.5px;font-weight:bold;color:#fff;top:20.0px;--w:24.9px;left:66.7px;transform:translateX(-100%) scaleX(0.711);transform-origin:100% 0">حفظ</div>
<svg class="abs" style="left:76px;top:21px" width="13" height="12" viewBox="0 0 13 12"><path d="M1.200 0h8.800l3 3v7.800a1.200 1.200 0 0 1-1.200 1.200h-10.600a1.200 1.200 0 0 1-1.200-1.200v-9.600a1.200 1.200 0 0 1 1.200-1.200z M2.500 1.800v2.700h6v-2.700z M6.500 6.200a2 2 0 1 0 0 4 2 2 0 0 0 0-4z" fill="#fff" fill-rule="evenodd"/></svg>
<div class="abs" style="left:120px;top:9px;width:77px;height:37px;background:#e4e9f2;border-radius:3px"></div>
<div class="t" dir="rtl" style="font-size:13.5px;color:#5b6b8c;top:20.0px;--w:22.7px;left:157.4px;transform:translateX(-100%) scaleX(0.873);transform-origin:100% 0;-webkit-text-stroke:.3px #5b6b8c">إلغاء</div>
<svg class="abs" style="left:168.500px;top:22px" width="10" height="10"><path d="M1.300 1.300l7.400 7.400M8.700 1.300l-7.400 7.400" stroke="#67738f" stroke-width="2.500" stroke-linecap="round"/></svg>
<div class="t" dir="rtl" style="font-size:15.5px;color:#333;top:18.8px;--w:125.9px;left:1133.7px;transform:translateX(-100%) scaleX(0.874);transform-origin:100% 0;-webkit-text-stroke:.25px #333">منشئ تصاميم الفواتير</div>
</div>
<div id="topbar" class="abs">
  <div id="tab" class="abs"></div>
  <div id="menu" class="abs"></div>
<svg class="abs" style="left:9px;top:14px" width="7" height="4"><path d="M0 0h7L3.5 4z" fill="#fff"/></svg>
<div class="t" style="font-size:12.2px;font-weight:bold;color:#fff;top:5.2px;--w:61.0px;left:20.0px;transform:scaleX(0.884);transform-origin:0 0;-webkit-text-stroke:0">Daftra Docs</div>
<div class="t" style="font-size:10px;color:#a9c9f9;top:20.5px;--w:55.0px;left:26.0px;transform:scaleX(0.948);transform-origin:0 0">Main Branch</div>
<div class="abs" style="left:91px;top:5px;width:27px;height:27px;background:#fff;border-radius:4px"></div>
<div class="t" dir="rtl" style="font-size:10px;font-weight:bold;color:#1f2a44;top:10.5px;--w:22.0px;left:115.5px;transform:translateX(-100%) scaleX(0.786);transform-origin:100% 0;-webkit-text-stroke:0"><span style="color:#1877f2">د</span>فترة</div>
<div class="abs" style="left:94.500px;top:21.500px;width:20px;height:2.500px;background:#1f2a44"></div>
<svg class="abs" style="left:142px;top:10px" width="18" height="20" viewBox="0 0 18 20"><path d="M9 1c.7 0 1.200.5 1.200 1.200v.5c2.600.6 4.300 2.800 4.300 5.500 0 3.500 1 4.800 2 5.800.7.700.2 1.800-.7 1.800H2.200c-.9 0-1.400-1.100-.7-1.800 1-1 2-2.300 2-5.800 0-2.700 1.700-4.900 4.300-5.500v-.5C7.800 1.500 8.300 1 9 1z M6.800 17h4.400a2.200 2.200 0 0 1-4.400 0z" fill="#fff"/></svg>
<div class="abs" style="left:136px;top:5px;width:14px;height:14px;border-radius:7px;background:#e26b73"></div>
<div class="t" style="font-size:9px;font-weight:bold;color:#fff;top:7.5px;--w:5.0px;left:140.5px;transform:scaleX(1.000);transform-origin:0 0">6</div>
<div class="t" dir="rtl" style="font-size:13px;color:#fff;top:11.5px;--w:44.0px;left:222.0px;transform:translateX(-100%) scaleX(0.815);transform-origin:100% 0">المساعدة</div>
<svg class="abs" style="left:228.400px;top:7.400px" width="22" height="22" viewBox="0 0 22 22"><circle cx="11" cy="11" r="10.750" fill="#fff"/><circle cx="11" cy="11" r="6.900" fill="none" stroke="#1877f2" stroke-width="2.800"/><path d="M3.800 3.800L18.200 18.200M18.200 3.800L3.800 18.200" stroke="#fff" stroke-width="4.600"/><circle cx="11" cy="11" r="5.500" fill="#fff"/><circle cx="11" cy="11" r="3.500" fill="#1877f2"/></svg>
<svg class="abs" style="left:278.500px;top:1.500px" width="13" height="15" viewBox="0 0 13 15"><path d="M6.500 0c2 1.500 3 4 3 6.500v2.500l2 2v3l-3-1.500h-4l-3 1.500v-3l2-2v-2.500c0-2.500 1-5 3-6.500z" fill="#fff"/><circle cx="6.500" cy="5.500" r="1.200" fill="#05aeef"/></svg>
<div class="t" dir="rtl" style="font-size:12.5px;color:#fff;top:23.8px;--w:35.7px;left:303.4px;transform:translateX(-100%) scaleX(0.892);transform-origin:100% 0">اختباري</div>
<div class="t" dir="rtl" style="font-size:13px;color:#fff;top:12.0px;--w:88.6px;left:411.6px;transform:translateX(-100%) scaleX(0.877);transform-origin:100% 0">الذهاب إلى الموقع</div>
<svg class="abs" style="left:422px;top:11px" width="16" height="14" viewBox="0 0 16 14"><path d="M1.600 0h12.800l1.600 4.300a2 2 0 0 1-4 0 2 2 0 0 1-4 0 2 2 0 0 1-4 0 2 2 0 0 1-4 0z M1.600 7.300q.8.400 1.600.100v2.100h9.600v-2.100q.8.300 1.600-.100v5.700a1 1 0 0 1-1 1h-10.800a1 1 0 0 1-1-1z" fill="#fff"/><g fill="#1877f2"><rect x="3.700" y=".8" width=".8" height="3.600"/><rect x="7.600" y=".8" width=".8" height="3.600"/><rect x="11.500" y=".8" width=".8" height="3.600"/></g></svg>
<div class="t" dir="rtl" style="font-size:13px;color:#fff;top:12.5px;--w:30.5px;left:820.5px;transform:translateX(-100%) scaleX(0.984);transform-origin:100% 0">تعديل</div>
<svg class="abs" style="left:833px;top:15px" width="5" height="8"><path d="M1 1l3 3-3 3" stroke="#fff" stroke-width="1.600" fill="none"/></svg>
<div class="t" dir="rtl" style="font-size:13px;color:#d3e4fd;top:12.5px;--w:129.0px;left:979.0px;transform:translateX(-100%) scaleX(0.908);transform-origin:100% 0">نموذج فاتورة 1 - عربي #1</div>
<svg class="abs" style="left:992px;top:15px" width="5" height="8"><path d="M1 1l3 3-3 3" stroke="#fff" stroke-width="1.600" fill="none"/></svg>
<div class="t" dir="rtl" style="font-size:13px;color:#d3e4fd;top:12.5px;--w:91.0px;left:1099.0px;transform:translateX(-100%) scaleX(0.948);transform-origin:100% 0">تصميمات الفواتير</div>
<svg class="abs" style="left:1132px;top:11px" width="21" height="14" viewBox="0 0 21 14"><g stroke="#fff" stroke-width="2" fill="none"><path d="M0 2h12M0 7h18M0 12h12M13 1l6 6-6 6"/></g></svg>
</div>

<div id="pscroll" class="abs">
  <svg class="abs" style="left:2px;top:6px" width="10" height="7"><path d="M5 0l5 7H0z" fill="#9e9e9e"/></svg>
  <div class="thumb" style="left:3.500px;top:107px;width:8.500px;height:486px;background:#9e9e9e;border-radius:4.500px"></div>
  <svg class="abs" style="left:2px;top:620px" width="10" height="7"><path d="M0 0h10L5 7z" fill="#9e9e9e"/></svg>
</div>

<div class="abs" style="left:1186.800px;top:261.800px;width:152.200px;height:48.300px;border:3.200px solid #fd5602"></div>
<svg class="abs" style="left:1130px;top:295px" width="70" height="55" viewBox="0 0 70 55"><path d="M8.200 47L45 19.300" stroke="#fd5602" stroke-width="3.200" fill="none"/><path d="M56.800 10.200L40.800 13.500 49.300 25z" fill="#fd5602"/></svg>
<div class="abs" style="left:1272px;top:553px;width:57px;height:57px;border-radius:50%;background:#0d6efd;box-shadow:0 2px 6px rgba(0,0,0,.25)"></div>
<svg class="abs" style="left:1288px;top:568px" width="25" height="25" viewBox="0 0 25 25"><path d="M7 0h6a12 12 0 0 1 12 12v1a12 12 0 0 1-12 12H0v-7.500h13a4.500 4.500 0 0 0 4.500-4.500v-1A4.500 4.500 0 0 0 13 7.500H7z" fill="#fff"/></svg>
<div class="abs" style="left:45px;top:605px;width:85px;height:30px;background:#37a7e1;border-radius:3px 3px 0 0"></div>
<svg class="abs" style="left:56px;top:612.700px" width="12" height="12" viewBox="0 0 12 12"><circle cx="6" cy="6" r="6" fill="#fff"/><path d="M4.200 4.600a1.900 1.900 0 1 1 2.800 1.700c-.6.300-.9.600-.9 1.300" stroke="#37a7e1" stroke-width="1.500" fill="none"/><circle cx="6.100" cy="9.300" r=".9" fill="#37a7e1"/></svg>
<div class="t" dir="rtl" style="font-size:11.5px;font-weight:bold;color:#fff;top:613.2px;--w:48.0px;left:119.5px;transform:translateX(-100%) scaleX(0.738);transform-origin:100% 0">لديك سؤال</div>

<script>
/* optional refinement: re-fit each label to its intended width if the fallback font differs */
(function(){try{var a=document.querySelectorAll('.t');for(var i=0;i<a.length;i++){var e=a[i],w=parseFloat(e.style.getPropertyValue('--w'));if(!w)continue;var r=e.getAttribute('dir')==='rtl',old=e.style.transform;e.style.transform='none';var n=e.getBoundingClientRect().width;if(n>0){var s=(w/n).toFixed(4);e.style.transform=r?'translateX(-100%) scaleX('+s+')':'scaleX('+s+')';}else{e.style.transform=old;}}}catch(_){}})();
</script>
</body>
</html>
